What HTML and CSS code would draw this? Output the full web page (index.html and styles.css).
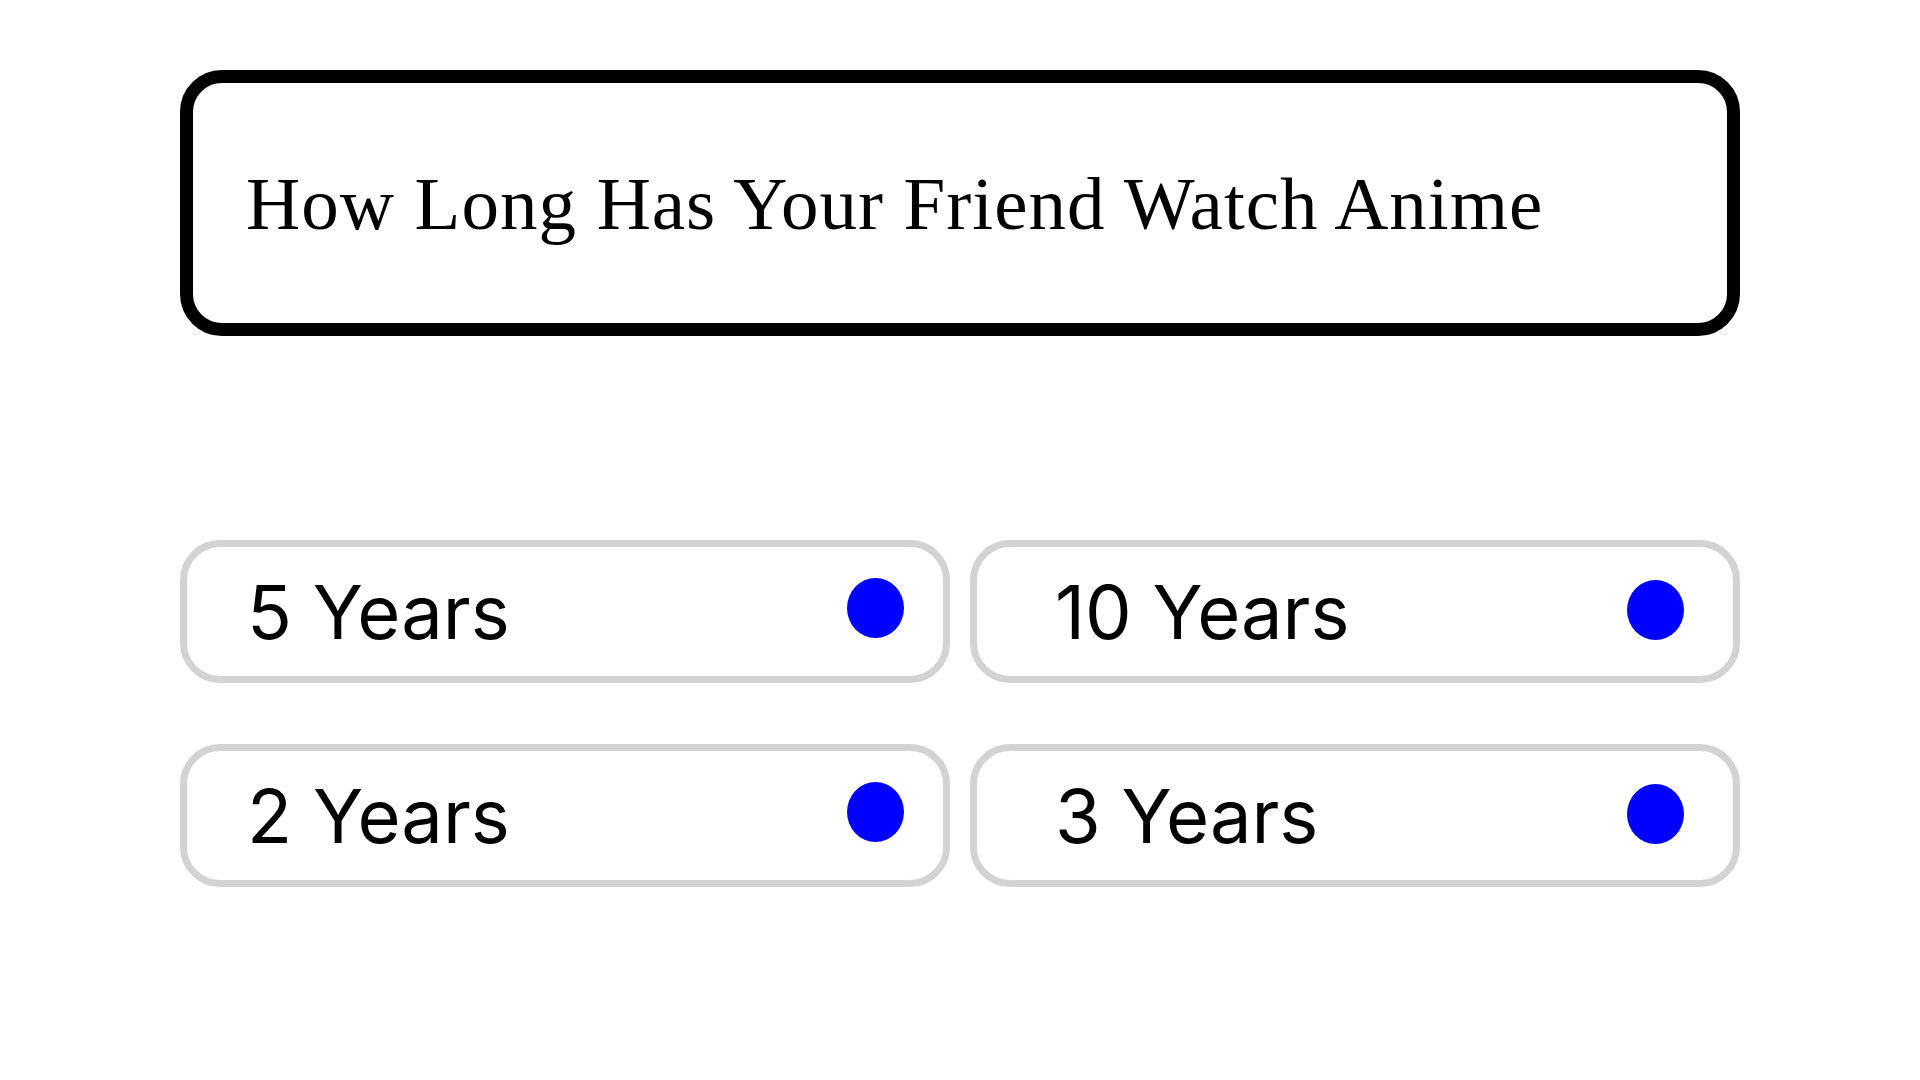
FILE: index.html
```html
<!DOCTYPE html>
<html lang="en">
<head>
<meta charset="utf-8">
<title>Quiz</title>
<link rel="stylesheet" href="styles.css">
</head>
<body>
<main class="quiz">
  <div class="question">
    <h1 class="question-text">How Long Has Your Friend Watch Anime</h1>
  </div>
  <div class="options">
    <div class="option">
      <span class="option-label">5 Years</span>
      <span class="dot"></span>
    </div>
    <div class="option option-right">
      <span class="option-label">10 Years</span>
      <span class="dot"></span>
    </div>
    <div class="option">
      <span class="option-label">2 Years</span>
      <span class="dot"></span>
    </div>
    <div class="option option-right">
      <span class="option-label">3 Years</span>
      <span class="dot"></span>
    </div>
  </div>
</main>
</body>
</html>
```

FILE: styles.css
```css
html, body {
  margin: 0;
  padding: 0;
  background: #ffffff;
}

.quiz {
  width: 1560px;
  margin: 70px auto 0;
}

.question {
  box-sizing: border-box;
  height: 266px;
  border: 13px solid #000000;
  border-radius: 42px;
  display: flex;
  align-items: center;
  padding-left: 53px;
}

.question-text {
  margin: 0;
  font-family: "Liberation Serif", "Times New Roman", serif;
  font-weight: 400;
  font-size: 75px;
  letter-spacing: 1px;
  line-height: 1;
  color: #000000;
}

.options {
  margin-top: 204px;
  display: grid;
  grid-template-columns: 1fr 1fr;
  column-gap: 20px;
  row-gap: 61px;
}

.option {
  box-sizing: border-box;
  height: 143px;
  border: 7px solid #d3d3d3;
  border-radius: 40px;
  display: flex;
  align-items: center;
  justify-content: space-between;
  padding: 0 39px 0 60px;
}

.option-right {
  padding: 0 49px 0 78px;
}

.option-label {
  font-family: Inter, "Noto Sans", sans-serif;
  font-size: 74px;
  line-height: 1;
  color: #000000;
}

.dot {
  width: 57px;
  height: 60px;
  border-radius: 50%;
  background: #0000ff;
  margin-bottom: 8px;
}

.option-right .dot {
  margin-bottom: 4px;
}
```
